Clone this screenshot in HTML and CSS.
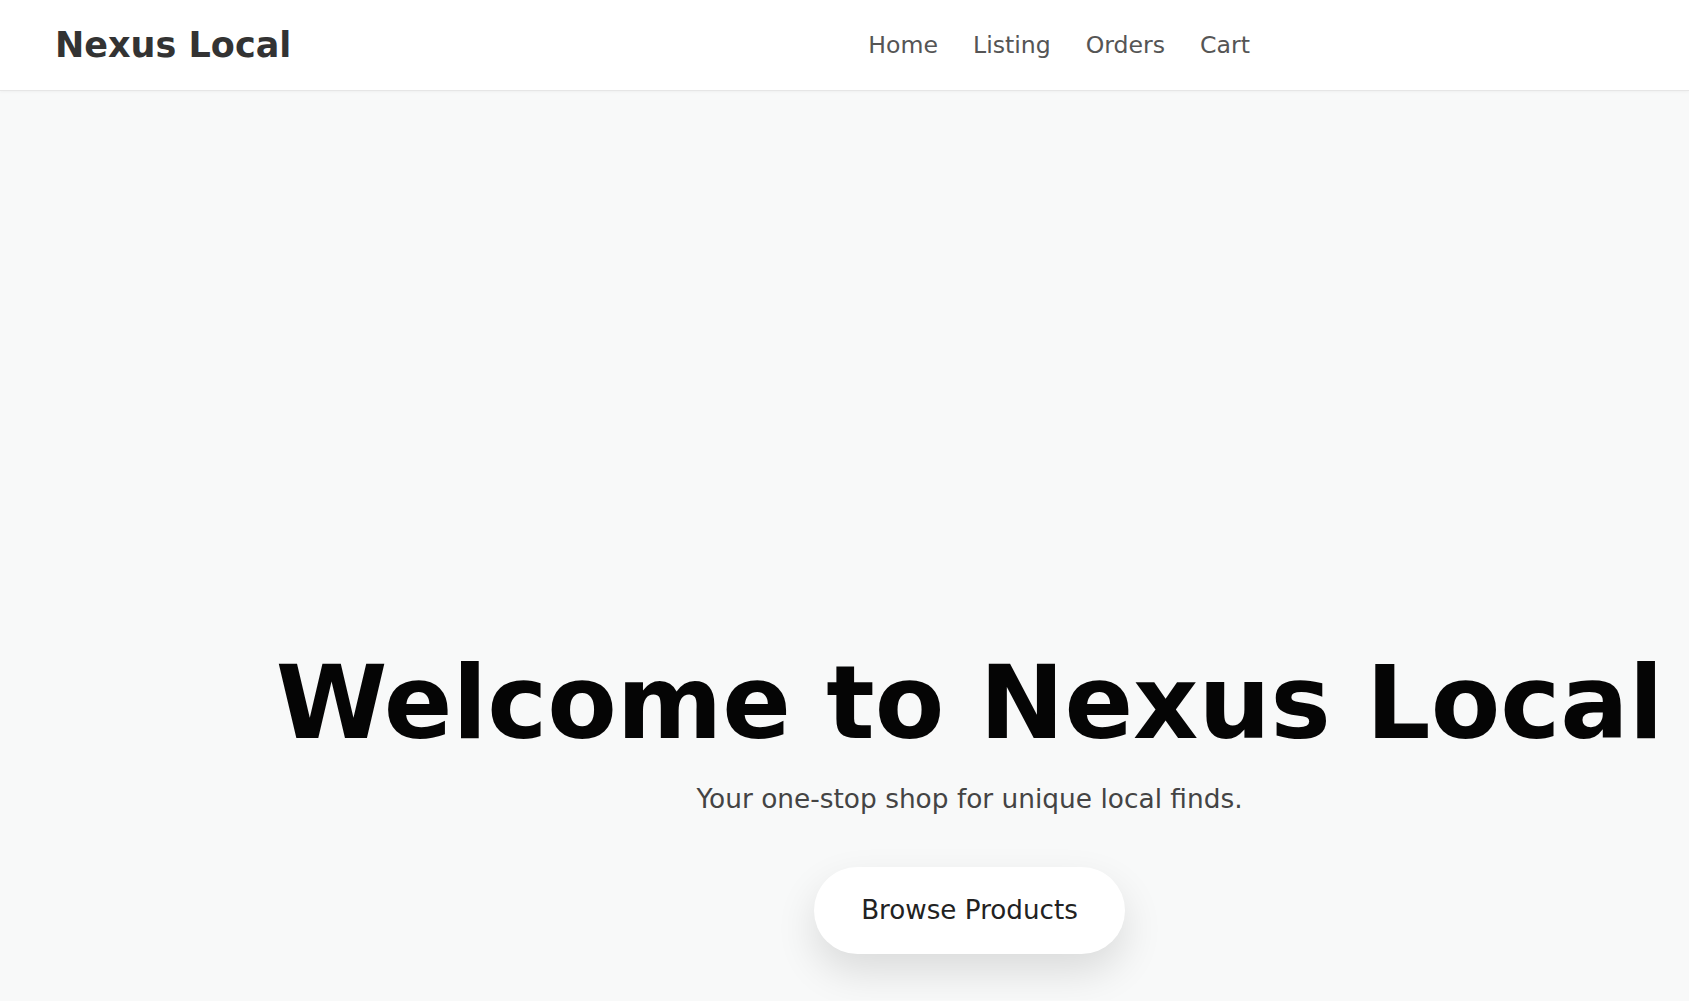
FILE: index.html
```html
<!DOCTYPE html>
<html lang="en">
<head>
<meta charset="utf-8">
<title>Nexus Local</title>
<link rel="stylesheet" href="styles.css">
</head>
<body>
<header class="site-header">
  <div class="logo">Nexus Local</div>
  <nav class="main-nav">
    <a href="#" class="nav-link">Home</a>
    <a href="#" class="nav-link">Listing</a>
    <a href="#" class="nav-link">Orders</a>
    <a href="#" class="nav-link">Cart</a>
  </nav>
</header>
<main class="hero">
  <h1 class="hero-title">Welcome to Nexus Local</h1>
  <p class="hero-subtitle">Your one-stop shop for unique local finds.</p>
  <a href="#" class="hero-button">Browse Products</a>
</main>
</body>
</html>
```

FILE: styles.css
```css
* {
  box-sizing: border-box;
}

html, body {
  margin: 0;
  padding: 0;
}

body {
  background: #f8f9f9;
  font-family: "DejaVu Sans", "Liberation Sans", sans-serif;
}

.site-header {
  display: flex;
  align-items: center;
  justify-content: space-between;
  height: 91px;
  padding: 0 439px 0 55px;
  background: #ffffff;
  border-bottom: 1px solid #e6e6e6;
  box-shadow: 0 1px 3px rgba(0, 0, 0, 0.04);
}

.logo {
  font-size: 35px;
  font-weight: bold;
  color: #333333;
}

.main-nav {
  display: flex;
  gap: 35px;
}

.nav-link {
  font-size: 23.6px;
  color: #555555;
  text-decoration: none;
}

.hero {
  display: flex;
  flex-direction: column;
  align-items: center;
  padding: 552px 0 46px 250px;
  text-align: center;
}

.hero-title {
  margin: 0;
  font-size: 101.3px;
  line-height: 1.2;
  font-weight: bold;
  color: #050505;
  white-space: nowrap;
}

.hero-subtitle {
  margin: 14px 0 0;
  font-size: 26.4px;
  line-height: 39px;
  color: #444444;
}

.hero-button {
  margin-top: 49px;
  padding: 28px 47px;
  font-size: 26.2px;
  line-height: 31px;
  color: #222222;
  background: #ffffff;
  border-radius: 44px;
  text-decoration: none;
  box-shadow: 0 18px 40px rgba(0, 0, 0, 0.12);
}
```
